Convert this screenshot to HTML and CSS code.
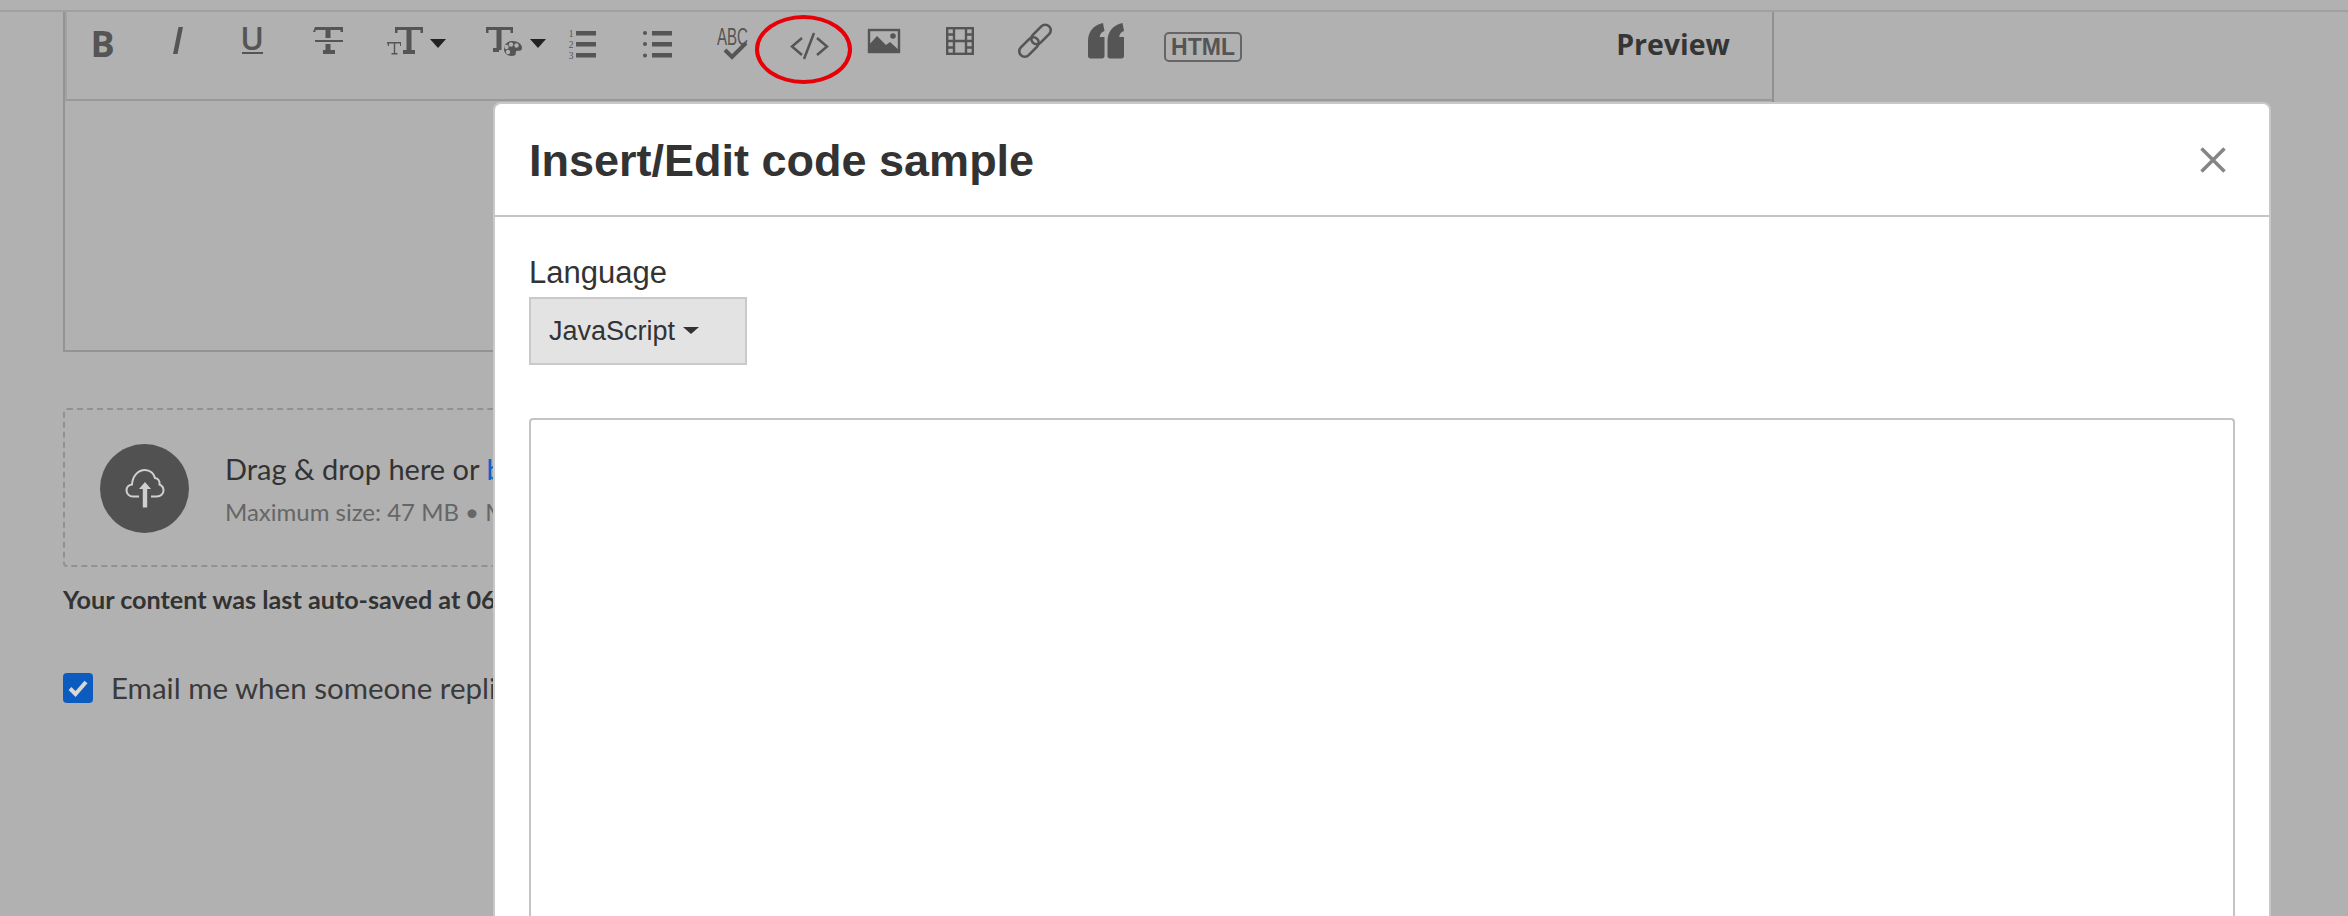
FILE: index.html
```html
<!DOCTYPE html>
<html lang="en">
<head>
    <meta charset="UTF-8">
    <title>Insert/Edit code sample</title>
    <link rel="stylesheet" href="styles.css">
</head>
<body>
    <div class="page-rule"></div>
    <div class="editor">
        <div class="toolbar">
            <span class="tb-btn">
                <svg width="24" height="40" viewBox="0 0 24 40"><text x="10.500" y="35" text-anchor="middle" class="ico-b">B</text></svg>
            </span>
            <span class="tb-btn">
                <svg width="24" height="40" viewBox="0 0 24 40"><polygon points="12.500,5 17,5 11.500,32 7,32" class="ico"/></svg>
            </span>
            <span class="tb-btn">
                <svg width="24" height="40" viewBox="0 0 24 40"><text x="11" y="28" text-anchor="middle" class="ico-u">U</text><rect x="1" y="30" width="21" height="2" class="ico"/></svg>
            </span>
            <span class="tb-btn">
                <svg width="28" height="40" viewBox="0 0 28 40">
                    <path d="M0 5h28v5h-2.500v-2h-10v8h-5v-8h-10v2h-2.500z" class="ico"/>
                    <rect x="0" y="18" width="28" height="2" class="ico"/>
                    <rect x="10.500" y="22" width="5" height="8" class="ico"/>
                    <rect x="8" y="28" width="12" height="4" class="ico"/>
                </svg>
            </span>
            <span class="tb-btn tb-drop tb-size">
                <svg width="37" height="40" viewBox="0 0 37 40">
                    <path d="M8 5h28v6h-2.500v-3h-9v20h-5v-20h-9v3h-2.500z" class="ico"/>
                    <rect x="16" y="28" width="12" height="4" class="ico"/>
                    <path d="M0 20h14v4h-1v-2.500h-4.800v9.500h2.300v1.500h-6v-1.500h2.300v-9.500h-4.800v2.500h-1z" class="ico"/>
                </svg>
                <span class="caret"></span>
            </span>
            <span class="tb-btn tb-drop tb-colour">
                <svg width="36" height="40" viewBox="0 0 36 40">
                    <path d="M0 5h27v6h-2.500v-3h-9v20h-5v-20h-8v3h-2.500z" class="ico"/>
                    <rect x="7" y="26" width="6" height="4" class="ico"/>
                    <g transform="translate(0 2)">
                        <path d="M25 17c6-.5 11 2.500 11 7 0 2-1.500 3-3.500 2.800-2-.2-3 .7-2.700 2.200.3 1.800-1 3-3.800 3-5 0-8-3-8-7 0-4 3-7.500 7-8z" class="ico"/>
                        <circle cx="22" cy="28" r="2.200" class="ico-hole"/>
                        <circle cx="20.500" cy="23" r="2.200" class="ico-hole"/>
                        <circle cx="25" cy="20.500" r="2.200" class="ico-hole"/>
                        <circle cx="30.500" cy="21.500" r="2.200" class="ico-hole"/>
                    </g>
                </svg>
                <span class="caret"></span>
            </span>
            <span class="tb-btn">
                <svg width="29" height="40" viewBox="0 0 29 40">
                    <text x="4" y="15" text-anchor="middle" class="ico-num">1</text>
                    <text x="4" y="26" text-anchor="middle" class="ico-num">2</text>
                    <text x="4" y="37" text-anchor="middle" class="ico-num">3</text>
                    <rect x="9" y="9" width="20" height="4.500" class="ico"/>
                    <rect x="9" y="20" width="20" height="4.500" class="ico"/>
                    <rect x="9" y="31" width="20" height="4.500" class="ico"/>
                </svg>
            </span>
            <span class="tb-btn">
                <svg width="29" height="40" viewBox="0 0 29 40">
                    <circle cx="2" cy="11" r="2" class="ico"/>
                    <circle cx="2" cy="22" r="2" class="ico"/>
                    <circle cx="2" cy="33.500" r="2" class="ico"/>
                    <rect x="9" y="9" width="20" height="4.500" class="ico"/>
                    <rect x="9" y="20" width="20" height="4.500" class="ico"/>
                    <rect x="9" y="31" width="20" height="4.500" class="ico"/>
                </svg>
            </span>
            <span class="tb-btn">
                <svg width="32" height="40" viewBox="0 0 32 40">
                    <text x="0" y="23" textLength="31" lengthAdjust="spacingAndGlyphs" class="ico-abc">ABC</text>
                    <path d="M8 28l7 7 14-14" class="ico-line ico-check"/>
                </svg>
            </span>
            <span class="tb-btn">
                <svg width="37" height="40" viewBox="0 0 37 40">
                    <path d="M12 16l-10 8.500 10 8.500M27 16l10 8.500-10 8.500M24 11l-10 26" class="ico-line ico-code"/>
                </svg>
            </span>
            <span class="tb-btn">
                <svg width="32" height="40" viewBox="0 0 32 40">
                    <rect x="1" y="8" width="30" height="22" class="ico-line ico-frame"/>
                    <path d="M0 31v-7l9-10 9 9 4-3 10 9v2z" class="ico"/>
                    <circle cx="25" cy="14" r="2.800" class="ico"/>
                </svg>
            </span>
            <span class="tb-btn">
                <svg width="28" height="40" viewBox="0 0 28 40">
                    <rect x="1.200" y="6.200" width="25.600" height="25.600" class="ico-line ico-frame"/>
                    <path d="M8 6v26M20 6v26M8 19h12M1 12.500h7M1 19h7M1 25.500h7M20 12.500h7M20 19h7M20 25.500h7" class="ico-line ico-frame"/>
                </svg>
            </span>
            <span class="tb-btn">
                <svg width="32" height="40" viewBox="0 0 32 40">
                    <rect x="10.500" y="7" width="23" height="11" rx="5.500" transform="rotate(-45 22 12.500)" class="ico-line ico-link"/>
                    <rect x="-1.500" y="19.500" width="23" height="11" rx="5.500" transform="rotate(-45 10 25)" class="ico-line ico-link"/>
                </svg>
            </span>
            <span class="tb-btn tb-quote">
                <svg width="36" height="40" viewBox="0 0 36 40">
                    <path d="M15 1l1.500 8c-3 1-4.500 3-4.800 6h4.800v19c0 1.500-1 2.500-2.500 2.500h-11.500c-1.500 0-2.500-1-2.500-2.500v-15c0-9 5-16 15-18z" class="ico"/>
                    <path d="M34.500 1l1.500 8c-3 1-4.500 3-4.800 6h4.800v19c0 1.500-1 2.500-2.500 2.500h-11.500c-1.500 0-2.500-1-2.500-2.500v-15c0-9 5-16 15-18z" class="ico"/>
                </svg>
            </span>
            <span class="tb-html">HTML</span>
            <span class="tb-preview">Preview</span>
        </div>
    </div>

    <div class="dropzone">
        <div class="upload-circle">
            <svg width="42" height="42" viewBox="0 0 42 42">
                <path d="M15 28.500H9C5 28.500 2.500 25.500 2.500 22.500C2.500 19 5 16.800 8 16.500C8.500 8 14 2 21 2C26 2 30 5.500 31 10C34 10.500 36 13 35.500 16.500C38 17.500 39.500 20 39.500 22.500C39.500 26 36.500 28.500 33 28.500H27" class="upload-cloud"/>
                <path d="M18.800 39.500v-18.500h-3.800l6-7 6 7h-3.800v18.500z" class="upload-arrow"/>
            </svg>
        </div>
        <div class="drop-text">
            <div class="drop-title">Drag &amp; drop here or <a class="drop-link">browse</a></div>
            <div class="drop-hint">Maximum size: 47 MB &bull; Maximum</div>
        </div>
    </div>
    <p class="autosave">Your content was last auto-saved at 06</p>
    <label class="notify">
        <span class="notify-box">
            <svg width="20" height="20" viewBox="0 0 20 20"><path d="M2 10.500l5.500 5.500 10.500-12" class="notify-tick"/></svg>
        </span>
        Email me when someone replies
    </label>

    <div class="red-circle"></div>

    <div class="modal">
        <div class="modal-head">
            <h1>Insert/Edit code sample</h1>
            <svg class="modal-close" width="26" height="26" viewBox="0 0 26 26"><path d="M1.500 1.500l23 23M24.500 1.500l-23 23"/></svg>
        </div>
        <div class="modal-body">
            <div class="field-label">Language</div>
            <div class="lang-select">JavaScript<span class="lang-caret"></span></div>
            <textarea class="code-input"></textarea>
        </div>
    </div>
</body>
</html>
```

FILE: styles.css
```css
html, body {
    height: 916px;
    overflow: hidden;
}
body {
    margin: 0;
    position: relative;
    background-color: #b1b1b1;
    font-family: Lato, "Liberation Sans", sans-serif;
    color: #333;
}
svg {
    overflow: visible;
}
.page-rule {
    height: 2px;
    margin-top: 10px;
    background-color: #a0a0a0;
}
.editor {
    width: 1707px;
    height: 338px;
    margin-left: 63px;
    border: 2px solid #939393;
    border-top: none;
    border-right-color: #919191;
}
.toolbar {
    display: flex;
    height: 77px;
    padding-top: 10px;
    border-left: 2px solid #a2a2a2;
    border-bottom: 2px solid #999;
}
.tb-btn {
    display: flex;
    flex: none;
    justify-content: center;
    align-items: flex-start;
    width: 75.6px;
    height: 40px;
}
.tb-btn:first-child {
    width: 73.1px;
}
.tb-drop {
    justify-content: flex-start;
    width: 88.5px;
}
.tb-size {
    padding-left: 20px;
    box-sizing: border-box;
}
.tb-colour {
    padding-left: 30.5px;
    box-sizing: border-box;
}
.tb-quote {
    width: 66px;
}
.caret {
    flex: none;
    width: 0;
    height: 0;
    margin: 17px 0 0 6px;
    border-left: 8px solid transparent;
    border-right: 8px solid transparent;
    border-top: 9px solid #222;
}
.tb-colour .caret {
    margin-left: 8px;
}
.tb-html {
    width: 74px;
    height: 26px;
    margin: 10px 0 0 25px;
    border: 2px solid #666;
    border-radius: 5px;
    font-family: "Liberation Sans", sans-serif;
    font-weight: 700;
    font-size: 23px;
    line-height: 27px;
    text-align: center;
    color: #555;
}
.tb-preview {
    margin: 4px 42px 0 auto;
    font-family: "Open Sans", sans-serif;
    font-weight: 700;
    font-size: 28.5px;
    line-height: 36px;
    color: #353535;
}
.ico {
    fill: #555;
}
.ico-hole {
    fill: #b1b1b1;
}
.ico-b {
    font-family: "Open Sans", sans-serif;
    font-weight: 700;
    font-size: 36px;
    fill: #555;
}
.ico-u {
    font-family: "Open Sans", sans-serif;
    font-weight: 600;
    font-size: 32px;
    fill: #555;
}
.ico-num {
    font-family: "Liberation Serif", serif;
    font-size: 9.5px;
    fill: #555;
}
.ico-abc {
    font-family: "Liberation Sans", sans-serif;
    font-size: 23px;
    fill: #555;
}
.ico-line {
    fill: none;
    stroke: #555;
    stroke-width: 2;
}
.ico-code {
    stroke-width: 2.500;
}
.ico-check {
    stroke-width: 4;
}
.ico-frame {
    stroke-width: 2.400;
}
.ico-link {
    stroke-width: 2.600;
}

.dropzone {
    display: flex;
    align-items: center;
    gap: 36px;
    box-sizing: border-box;
    width: 1709px;
    height: 159px;
    margin: 56px 0 0 63px;
    padding-left: 35px;
    border: 2px dashed #919191;
    border-radius: 4px;
}
.upload-circle {
    display: flex;
    align-items: center;
    justify-content: center;
    width: 89px;
    height: 89px;
    margin-top: 2px;
    border-radius: 50%;
    background-color: #515151;
}
.upload-cloud {
    fill: none;
    stroke: #d0d0d0;
    stroke-width: 2;
}
.upload-arrow {
    fill: #d0d0d0;
}
.drop-text {
    padding-top: 3px;
}
.drop-title {
    font-size: 29px;
    line-height: 36px;
    color: #333;
}
.drop-link {
    color: #0f62c4;
}
.drop-hint {
    margin-top: 9px;
    font-size: 24px;
    line-height: 32px;
    color: #666;
}
.autosave {
    margin: 16px 0 0 63px;
    font-size: 25.2px;
    line-height: 32px;
    font-weight: 700;
    color: #333;
}
.notify {
    display: flex;
    align-items: center;
    gap: 18px;
    margin: 55px 0 0 63px;
    font-size: 29.5px;
    line-height: 36px;
    color: #3a3a3a;
}
.notify-box {
    display: flex;
    align-items: center;
    justify-content: center;
    width: 30px;
    height: 30px;
    border-radius: 4px;
    background-color: #0c5cc0;
}
.notify-tick {
    fill: none;
    stroke: #d8d8d8;
    stroke-width: 4;
}

.red-circle {
    position: absolute;
    left: 755px;
    top: 15px;
    box-sizing: border-box;
    width: 97px;
    height: 69px;
    border: 4px solid #e60008;
    border-radius: 50%;
}

.modal {
    position: absolute;
    left: 493px;
    top: 102px;
    box-sizing: border-box;
    width: 1778px;
    height: 814px;
    overflow: hidden;
    border: 2px solid #c8c8c8;
    border-bottom: none;
    border-radius: 8px 8px 0 0;
    background-color: #fff;
    font-family: "Liberation Sans", sans-serif;
}
.modal-head {
    display: flex;
    align-items: center;
    justify-content: space-between;
    box-sizing: border-box;
    height: 113px;
    padding: 3px 43px 0 34px;
    border-bottom: 2px solid #c4c4c4;
}
.modal-head h1 {
    margin: 0;
    font-size: 45px;
    font-weight: 700;
    color: #333;
}
.modal-close {
    fill: none;
    stroke: #858585;
    stroke-width: 3.500;
    margin-bottom: 3px;
}
.modal-body {
    padding: 0 34px;
}
.field-label {
    padding-top: 32px;
    font-size: 31px;
    line-height: 48px;
    color: #333;
}
.lang-select {
    box-sizing: border-box;
    width: 218px;
    height: 68px;
    padding-left: 18px;
    border: 2px solid #c9c9c9;
    background-color: #e3e3e3;
    font-size: 27px;
    line-height: 64px;
    color: #333;
}
.lang-caret {
    display: inline-block;
    width: 0;
    height: 0;
    margin-left: 8px;
    vertical-align: 6px;
    border-left: 8px solid transparent;
    border-right: 8px solid transparent;
    border-top: 7px solid #333;
}
.code-input {
    display: block;
    box-sizing: border-box;
    width: 100%;
    height: 498px;
    margin-top: 53px;
    padding: 0;
    border: 2px solid #c4c4c4;
    border-bottom: none;
    border-radius: 4px 4px 0 0;
    background-color: #fff;
    resize: none;
}
```
